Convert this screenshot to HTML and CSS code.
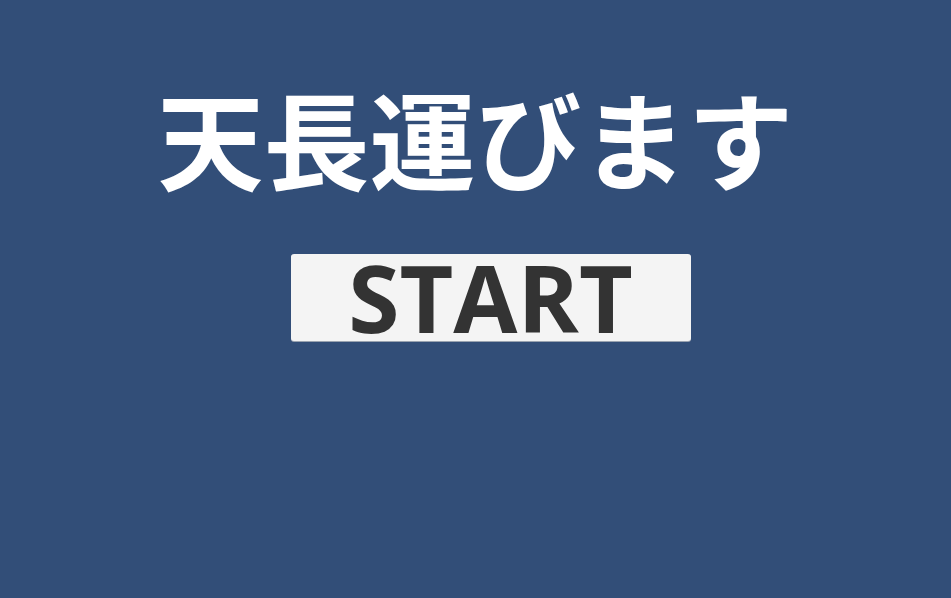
FILE: index.html
```html
<!DOCTYPE html>
<html lang="ja">
<head>
<meta charset="utf-8">
<title>天長運びます</title>
<link rel="stylesheet" href="styles.css">
</head>
<body>
<main class="screen">
  <h1 class="title">天長運びます</h1>
  <button class="start" type="button">START</button>
</main>
</body>
</html>
```
FILE: styles.css
```css
html, body {
  margin: 0;
  padding: 0;
  width: 100%;
  height: 100%;
  background: #324e78;
  overflow: hidden;
}
.screen {
  display: flex;
  flex-direction: column;
  align-items: center;
  padding-top: 83px;
}
.title {
  margin: 0;
  font-family: "Noto Sans CJK JP", sans-serif;
  font-weight: 700;
  font-size: 106px;
  line-height: 1;
  color: #ffffff;
  letter-spacing: 0;
}
.start {
  margin: 65px 0 0 30px;
  width: 400px;
  height: 87px;
  padding: 0;
  background: #f4f4f4;
  border: none;
  border-radius: 3px;
  box-shadow: 0 1px 0 #9aa3b0;
  font-family: "Open Sans", sans-serif;
  font-weight: 700;
  font-size: 93px;
  line-height: 85px;
  color: #333333;
  letter-spacing: 0;
}
```
